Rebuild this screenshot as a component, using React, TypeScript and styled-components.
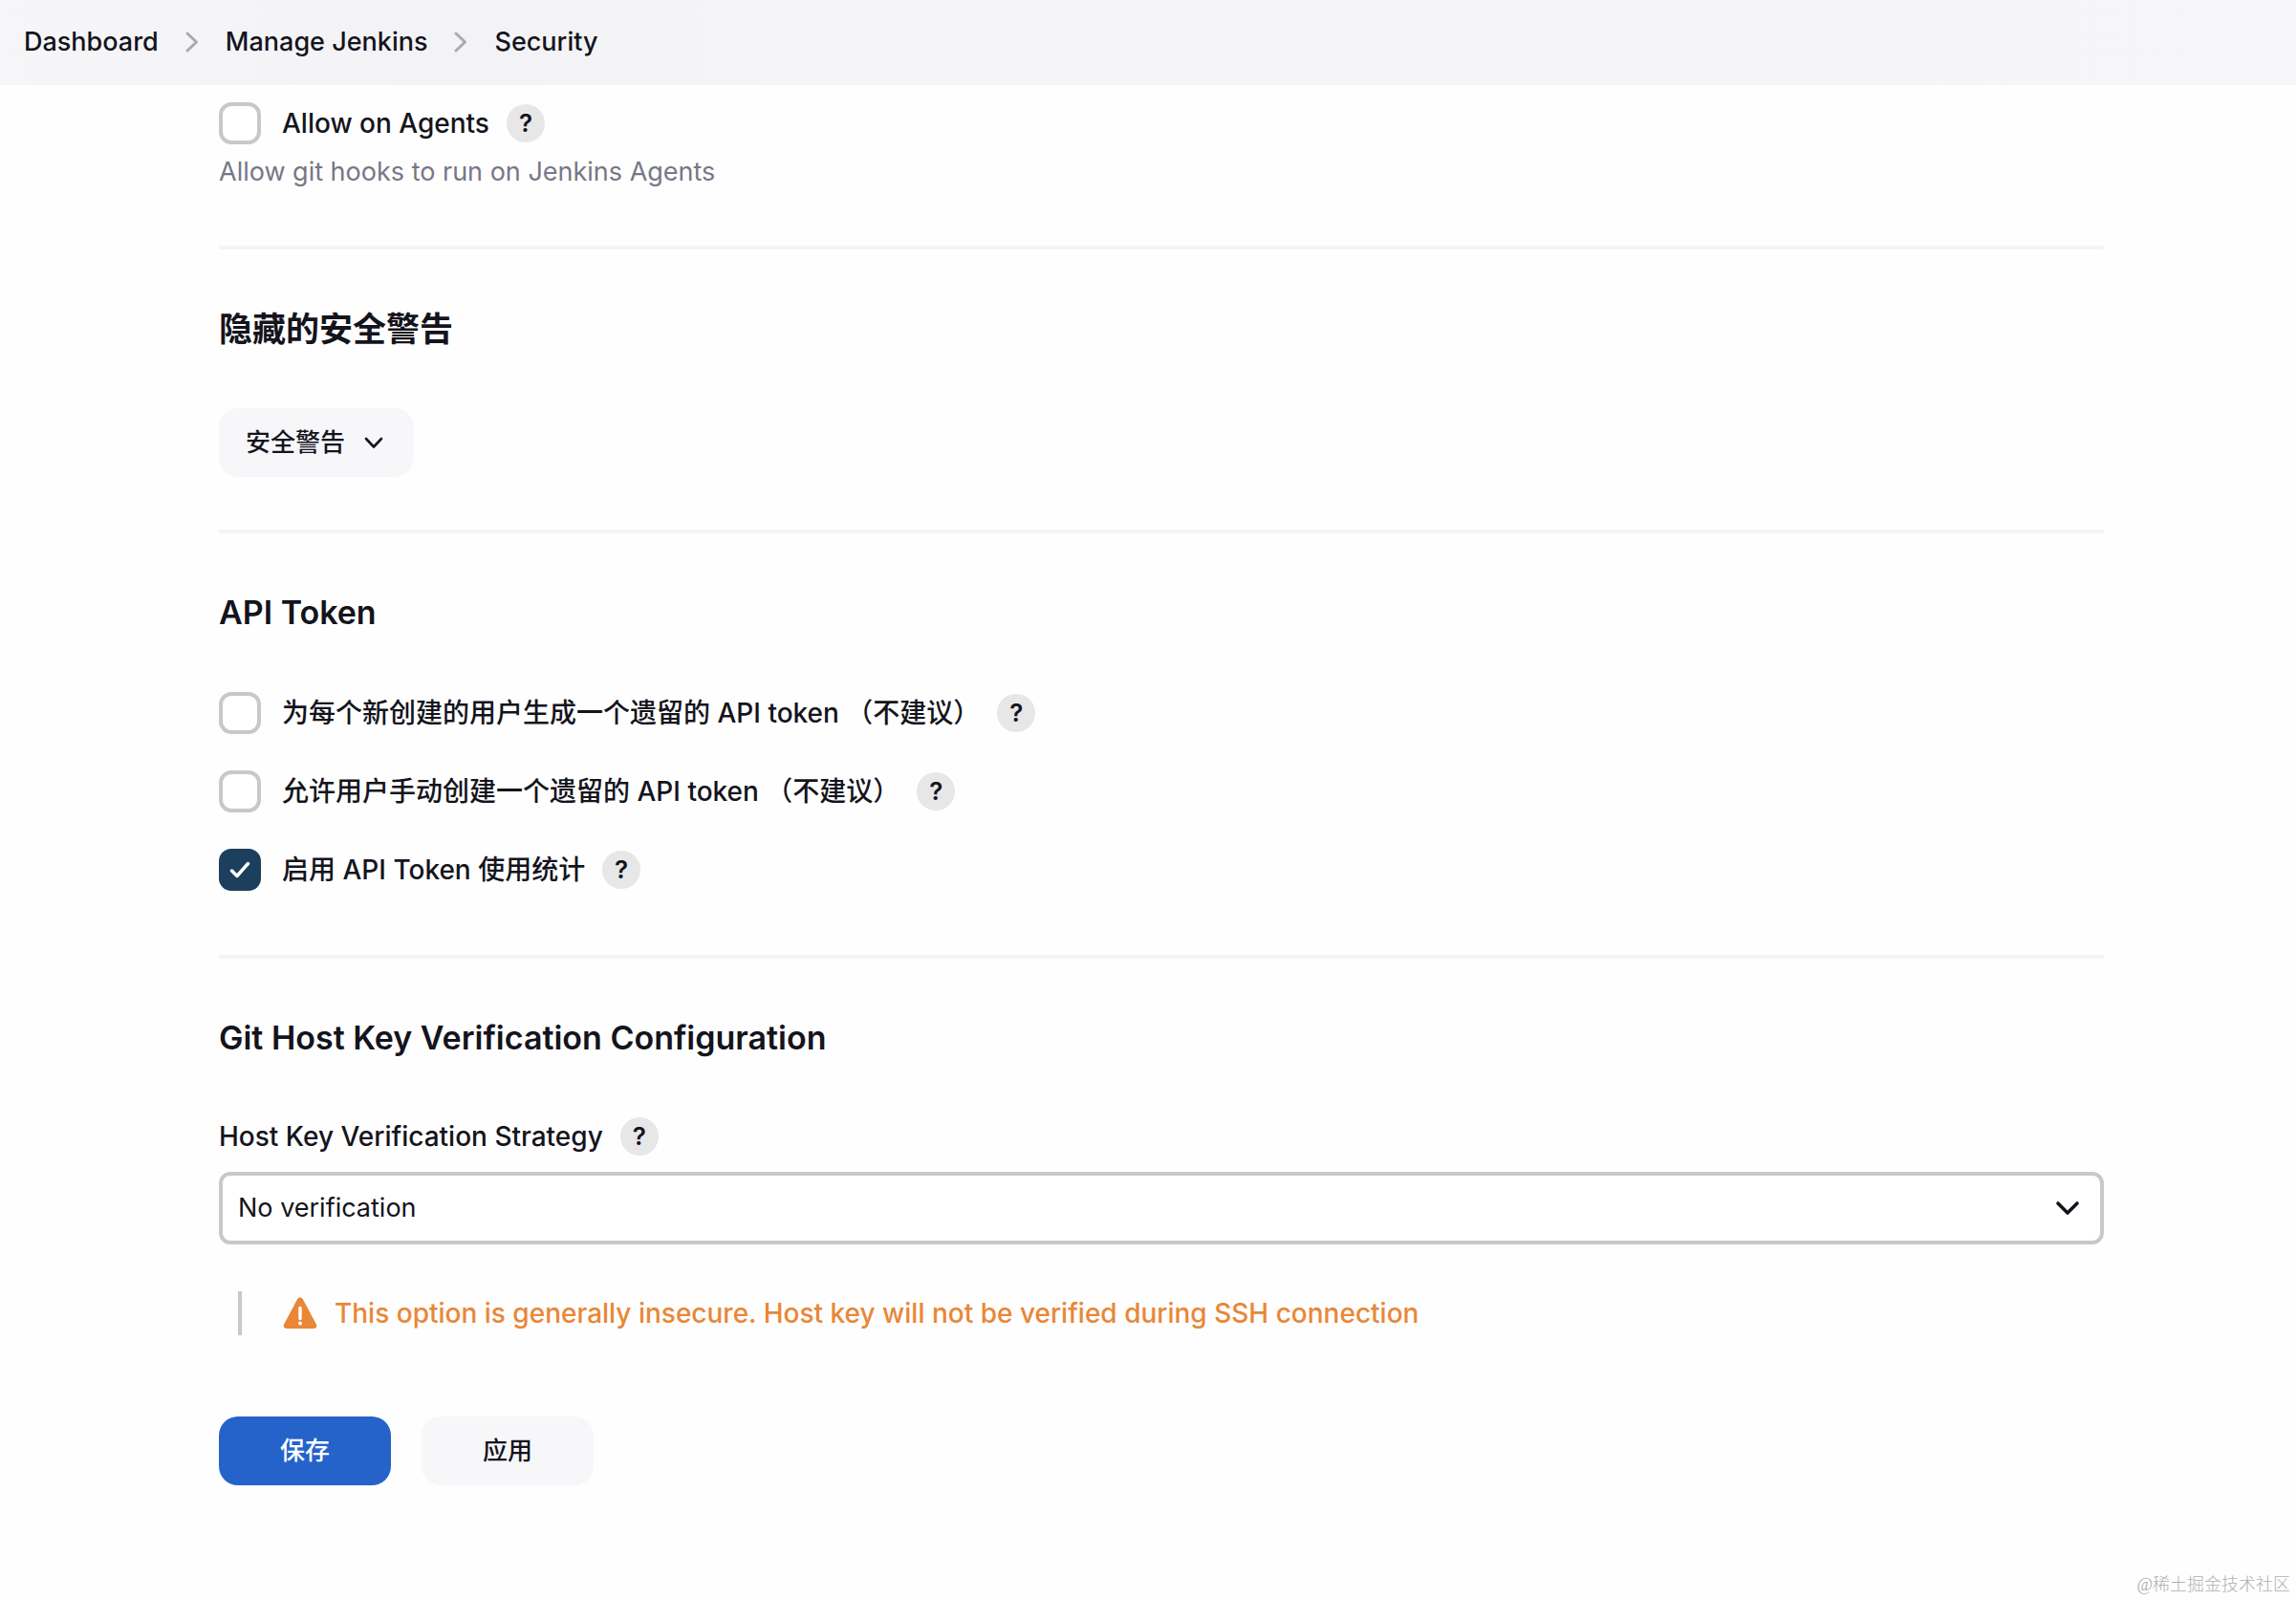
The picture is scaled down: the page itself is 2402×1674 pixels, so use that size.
import React, { useId, useState } from "react";
import styled, { createGlobalStyle } from "styled-components";

const GlobalStyle = createGlobalStyle`
  *, *::before, *::after { box-sizing: border-box; }
  body {
    margin: 0;
    background: #fefefe;
    color: #14141c;
    font-family: Inter, "Noto Sans CJK SC", sans-serif;
    font-size: 28px;
    line-height: 44px;
  }
  button, input, select { font: inherit; color: inherit; }
`;

const Page = styled.div`
  display: flex;
  flex-direction: column;
  min-height: 100vh;
`;

const Header = styled.header`
  padding: 22px 25px 23px;
  background: linear-gradient(90deg, #f6f6f9 0, #f3f3f6 480px, #f5f5f8 860px, #f6f6f9 100%);
`;

const Crumbs = styled.ol`
  display: flex;
  align-items: center;
  gap: 27px;
  margin: 0;
  padding: 0;
  list-style: none;
`;

const Crumb = styled.li`
  display: flex;
  align-items: center;
  gap: 27px;
  font-size: 27px;
  font-weight: 500;
`;

const CrumbLink = styled.a`
  color: inherit;
  text-decoration: none;
`;

const Form = styled.form`
  padding: 18px 201px 0 229px;
`;

const Section = styled.section<{ $roomy?: boolean }>`
  padding-bottom: ${(p) => (p.$roomy ? 67 : 55)}px;

  & + & {
    border-top: 4px solid #f4f4f6;
    padding-top: 60px;
  }

  &:last-of-type { padding-bottom: 0; }
`;

const Heading = styled.h2`
  margin: 0 0 60px;
  font-size: 34px;
  line-height: 46px;
  font-weight: 600;

  &:lang(zh) { font-size: 35px; }
`;

const Rows = styled.div`
  display: flex;
  flex-direction: column;
  gap: 38px;
`;

const Row = styled.div`
  display: flex;
  align-items: center;
  gap: 18px;
`;

const CheckLabel = styled.label`
  display: flex;
  align-items: center;
  gap: 22px;
  font-weight: 500;
  white-space: pre;
`;

const CheckFrame = styled.span`
  display: grid;
  width: 44px;
  height: 44px;

  & > * { grid-area: 1 / 1; }
`;

const CheckInput = styled.input`
  appearance: none;
  margin: 0;
  width: 44px;
  height: 44px;
  border: 4px solid #c6c9ca;
  border-radius: 13px;
  background: #fff;

  &:checked {
    border-color: #1b3f5d;
    background: #1b3f5d;
  }
`;

const CheckMark = styled.svg`
  width: 44px;
  height: 44px;
  pointer-events: none;
`;

const HelpButton = styled.button`
  display: grid;
  place-items: center;
  width: 40px;
  height: 40px;
  padding: 0;
  border: 0;
  border-radius: 50%;
  background: #e7e7e8;
  font-size: 26px;
  line-height: 40px;
  font-weight: 600;
`;

const Description = styled.p`
  margin: 7px 0 0;
  color: #777786;
  font-size: 27px;
`;

const Button = styled.button<{ $primary?: boolean; $wide?: boolean }>`
  display: inline-flex;
  align-items: center;
  justify-content: center;
  gap: 16px;
  min-width: ${(p) => (p.$wide ? 180 : 0)}px;
  height: 72px;
  padding: 0 28px;
  border: 0;
  border-radius: 20px;
  background: ${(p) => (p.$primary ? "#2563cb" : "#f7f7fa")};
  color: ${(p) => (p.$primary ? "#fff" : "#14141c")};
  font-size: 26px;
  font-weight: 500;
`;

const FieldLabel = styled.label`
  font-weight: 500;
  line-height: 40px;
`;

const SelectFrame = styled.div`
  display: grid;
  align-items: center;
  margin-top: 17px;

  & > * { grid-area: 1 / 1; }
`;

const SelectInput = styled.select`
  appearance: none;
  width: 100%;
  height: 76px;
  padding: 0 80px 0 16px;
  border: 4px solid #c6c9ca;
  border-radius: 12px;
  background: #fff;
  font-size: 27px;
`;

const SelectArrow = styled.svg`
  justify-self: end;
  width: 28px;
  height: 28px;
  margin-right: 24px;
  pointer-events: none;
`;

const Warning = styled.div`
  display: flex;
  align-items: center;
  gap: 18px;
  height: 46px;
  margin: 49px 0 0 20px;
  padding-left: 47px;
  background: linear-gradient(#c6c9ca, #c6c9ca) left / 4px 100% no-repeat;
  color: #e98737;
  font-weight: 500;
`;

const Actions = styled.div`
  display: flex;
  gap: 32px;
  margin-top: 85px;
`;

const Footer = styled.footer`
  margin-top: auto;
  padding: 0 6px 3px;
  color: #b0b0b2;
  font-family: "Liberation Serif", "Noto Sans CJK SC", serif;
  font-size: 18px;
  font-weight: 300;
  line-height: 26px;
  text-align: right;
`;

const CrumbChevron = () => (
  <svg width="16" height="24" viewBox="0 0 16 24" fill="none" aria-hidden="true">
    <path d="M3 3 12.5 12 3 21" stroke="#a9a9ae" strokeWidth="3" strokeLinecap="round" strokeLinejoin="round" />
  </svg>
);

const MenuChevron = () => (
  <svg width="28" height="28" viewBox="0 0 28 28" fill="none" aria-hidden="true">
    <path d="M6 10 14 18.5 22 10" stroke="#14141c" strokeWidth="2.6" strokeLinecap="round" strokeLinejoin="round" />
  </svg>
);

const WarningIcon = () => (
  <svg width="36" height="34" viewBox="0 0 36 34" aria-hidden="true">
    <path d="M15.2 2.1c1.2-2.2 4.3-2.2 5.5 0l14.2 26.3c1.1 2.2-.3 4.6-2.7 4.6H3.8c-2.4 0-3.8-2.4-2.7-4.6Z" fill="#e98737" />
    <path d="M18 11.5v11" stroke="#fff" strokeWidth="3.4" strokeLinecap="round" />
    <circle cx="18" cy="27.4" r="2" fill="#fff" />
  </svg>
);

const Help = ({ topic }: { topic: string }) => (
  <HelpButton type="button" aria-label={`Help for ${topic}`}>?</HelpButton>
);

function CheckRow({ label, initial = false }: { label: string; initial?: boolean }) {
  const id = useId();
  const [checked, setChecked] = useState(initial);
  return (
    <Row>
      <CheckLabel htmlFor={id}>
        <CheckFrame>
          <CheckInput id={id} type="checkbox" checked={checked} onChange={(e) => setChecked(e.target.checked)} />
          {checked && (
            <CheckMark viewBox="0 0 44 44" fill="none" aria-hidden="true">
              <path d="M13.5 23 19 28.5 30.5 15.5" stroke="#fff" strokeWidth="3.5" strokeLinecap="round" strokeLinejoin="round" />
            </CheckMark>
          )}
        </CheckFrame>
        {label}
      </CheckLabel>
      <Help topic={label} />
    </Row>
  );
}

const crumbs = ["Dashboard", "Manage Jenkins", "Security"];

export default function App() {
  return (
    <>
      <GlobalStyle />
      <Page>
        <Header>
          <nav aria-label="Breadcrumb">
            <Crumbs>
              {crumbs.map((name, i) => (
                <Crumb key={name}>
                  {i > 0 && <CrumbChevron />}
                  <CrumbLink href="#">{name}</CrumbLink>
                </Crumb>
              ))}
            </Crumbs>
          </nav>
        </Header>
        <Form onSubmit={(e) => e.preventDefault()}>
          <Section>
            <CheckRow label="Allow on Agents" />
            <Description>Allow git hooks to run on Jenkins Agents</Description>
          </Section>
          <Section>
            <Heading lang="zh">隐藏的安全警告</Heading>
            <Button type="button">
              安全警告
              <MenuChevron />
            </Button>
          </Section>
          <Section $roomy>
            <Heading>API Token</Heading>
            <Rows>
              <CheckRow label="为每个新创建的用户生成一个遗留的 API token （不建议）" />
              <CheckRow label="允许用户手动创建一个遗留的 API token （不建议）" />
              <CheckRow label="启用 API Token 使用统计" initial />
            </Rows>
          </Section>
          <Section>
            <Heading>Git Host Key Verification Configuration</Heading>
            <Row>
              <FieldLabel htmlFor="strategy">Host Key Verification Strategy</FieldLabel>
              <Help topic="Host Key Verification Strategy" />
            </Row>
            <SelectFrame>
              <SelectInput id="strategy" defaultValue="none">
                <option value="none">No verification</option>
              </SelectInput>
              <SelectArrow viewBox="0 0 28 28" fill="none" aria-hidden="true">
                <path d="M4 9 14 19 24 9" stroke="#14141c" strokeWidth="3.6" strokeLinecap="round" strokeLinejoin="round" />
              </SelectArrow>
            </SelectFrame>
            <Warning>
              <WarningIcon />
              This option is generally insecure. Host key will not be verified during SSH connection
            </Warning>
          </Section>
          <Actions>
            <Button $primary $wide type="submit">保存</Button>
            <Button $wide type="button">应用</Button>
          </Actions>
        </Form>
        <Footer>@稀土掘金技术社区</Footer>
      </Page>
    </>
  );
}
